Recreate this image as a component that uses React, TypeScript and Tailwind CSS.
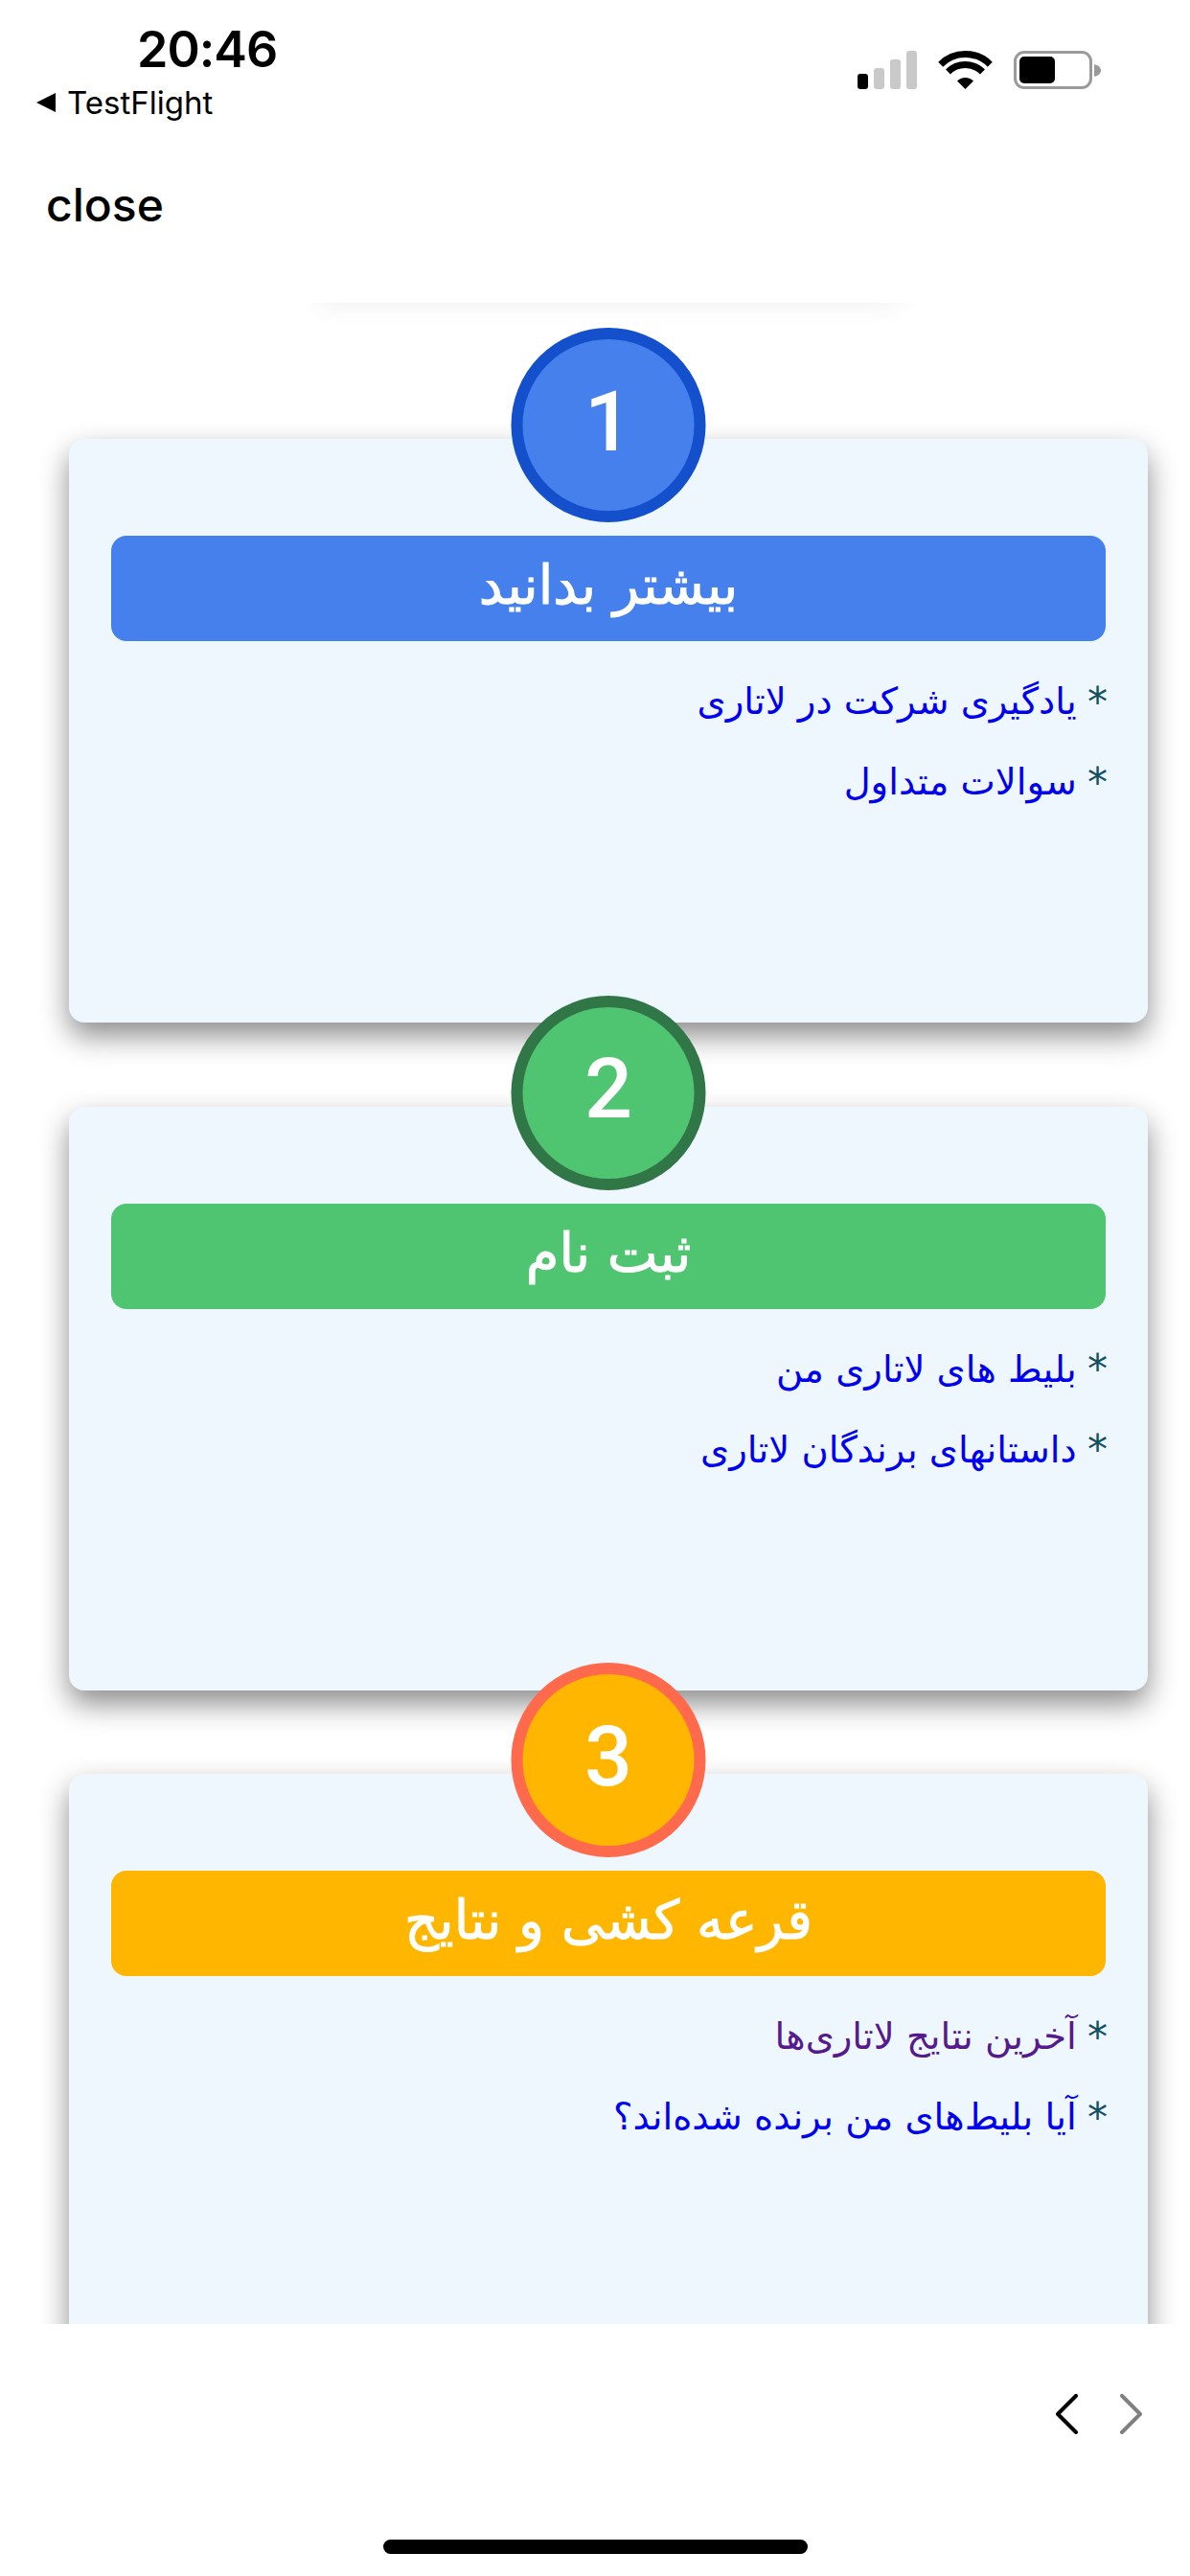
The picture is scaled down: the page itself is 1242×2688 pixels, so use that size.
import React from "react";

type Step = {
  num: string;
  title: string;
  fill: string;
  ring: string;
  items: { label: string; visited?: boolean }[];
};

const steps: Step[] = [
  {
    num: "1",
    title: "بیشتر بدانید",
    fill: "bg-[#4580ec]",
    ring: "border-[#1450cb]",
    items: [{ label: "یادگیری شرکت در لاتاری" }, { label: "سوالات متداول" }],
  },
  {
    num: "2",
    title: "ثبت نام",
    fill: "bg-[#4fc571]",
    ring: "border-[#317646]",
    items: [{ label: "بلیط های لاتاری من" }, { label: "داستانهای برندگان لاتاری" }],
  },
  {
    num: "3",
    title: "قرعه کشی و نتایج",
    fill: "bg-[#ffb600]",
    ring: "border-[#ff6a4d]",
    items: [
      { label: "آخرین نتایج لاتاری‌ها", visited: true },
      { label: "آیا بلیط‌های من برنده شده‌اند؟" },
    ],
  },
];

const StatusBar = () => (
  <div className="h-[140px] shrink-0">
    <div className="flex items-start justify-between pl-[37px] pr-[93px] pt-[21px]">
      <div className="flex flex-col">
        <span className="ml-[106px] text-[52px] leading-[62px] font-semibold text-black font-['Inter',sans-serif] tracking-[-1px]">
          20:46
        </span>
        <span className="mt-[4px] flex items-center gap-[12px] text-[33px] leading-[40px] text-black font-['Inter',sans-serif]">
          <svg width="21" height="20" viewBox="0 0 21 20">
            <path d="M21 0v20L1 10z" fill="#000" />
          </svg>
          TestFlight
        </span>
      </div>
      <div className="flex items-start gap-[22px] pt-[32px]">
        <div className="flex items-end gap-[6px] h-[40px]">
          <div className="w-[11px] h-[16px] rounded-[3px] bg-black" />
          <div className="w-[11px] h-[22px] rounded-[3px] bg-[#c9c9c9]" />
          <div className="w-[11px] h-[31px] rounded-[3px] bg-[#c9c9c9]" />
          <div className="w-[11px] h-[40px] rounded-[3px] bg-[#c9c9c9]" />
        </div>
        <svg width="57" height="40" viewBox="0 0 57 40" fill="none">
          <path d="M2.700 14.200A36.500 36.500 0 0 1 54.300 14.200" stroke="#000" strokeWidth="7" />
          <path d="M10.500 22A25.500 25.500 0 0 1 46.500 22" stroke="#000" strokeWidth="7" />
          <path d="M28.500 40 20 31.500A12 12 0 0 1 37 31.500z" fill="#000" />
        </svg>
        <div className="flex items-center">
          <div className="w-[82px] h-[40px] rounded-[11px] border-[3px] border-[#9a9a9a] p-[3px]">
            <div className="w-[37px] h-[28px] rounded-[5px] bg-black" />
          </div>
          <svg className="ml-[2px]" width="7" height="13" viewBox="0 0 7 13">
            <path d="M0 0c4 1 7 3 7 6.500S4 12 0 13z" fill="#9a9a9a" />
          </svg>
        </div>
      </div>
    </div>
  </div>
);

const Card = ({ step }: { step: Step }) => (
  <div className="relative h-[609px] shrink-0 rounded-[16px] bg-[#eff7fe] px-[44px] pt-[101px] shadow-[0_14px_30px_rgba(0,0,0,0.45)]">
    <div
      className={`absolute -top-[116px] left-1/2 -translate-x-1/2 w-[203px] h-[203px] rounded-full border-[12px] pb-[8px] flex items-center justify-center ${step.fill} ${step.ring}`}
    >
      <span className="text-[88px] leading-none font-medium text-white font-['Roboto',sans-serif]">{step.num}</span>
    </div>
    <div className={`h-[110px] rounded-[16px] pb-[6px] flex items-center justify-center ${step.fill}`}>
      <span className="text-[56px] text-white tracking-[1px] [-webkit-text-stroke:1px_#fff]">{step.title}</span>
    </div>
    <ul className="mt-[21px] -mr-[2px]">
      {step.items.map((item) => (
        <li key={item.label} className="h-[84px] flex items-center text-[38.5px] text-[#12505f]">
          <span className="whitespace-pre text-[42px] ml-[-2px]">* </span>
          <a className={item.visited ? "text-[#551a8b]" : "text-[#0000ee]"}>{item.label}</a>
        </li>
      ))}
    </ul>
  </div>
);

export default function App() {
  return (
    <div className="w-[1242px] h-[2688px] flex flex-col bg-white overflow-hidden font-['DejaVu_Sans',sans-serif]">
      <StatusBar />
      <div className="h-[176px] shrink-0 pl-[48px] pt-[44px] text-[48px] leading-[60px] font-medium text-black font-['Inter',sans-serif]">
        close
      </div>

      <main dir="rtl" className="relative h-[2109px] shrink-0 overflow-hidden">
        {/* bottom of the previous slide peeking out under the header */}
        <div className="absolute -top-[40px] left-[330px] w-[610px] h-[40px] shadow-[0_0_30px_rgba(0,0,0,0.07)]" />
        <div className="flex flex-col gap-[87.5px] pt-[142px] pl-[72px] pr-[44px]">
          {steps.map((step) => (
            <Card key={step.num} step={step} />
          ))}
        </div>
      </main>

      <div className="relative flex-1">
        <div className="flex justify-end gap-[44px] pr-[50px] pt-[73px]">
          <svg width="23" height="42" viewBox="0 0 23 42" fill="none" stroke="#000" strokeWidth="4" strokeLinecap="round" strokeLinejoin="round">
            <path d="M21 2 2 21l19 19" />
          </svg>
          <svg width="23" height="42" viewBox="0 0 23 42" fill="none" stroke="#808080" strokeWidth="4" strokeLinecap="round" strokeLinejoin="round">
            <path d="m2 2 19 19L2 40" />
          </svg>
        </div>
        <div className="absolute left-[400px] bottom-[23px] w-[443px] h-[15px] rounded-full bg-black" />
      </div>
    </div>
  );
}
